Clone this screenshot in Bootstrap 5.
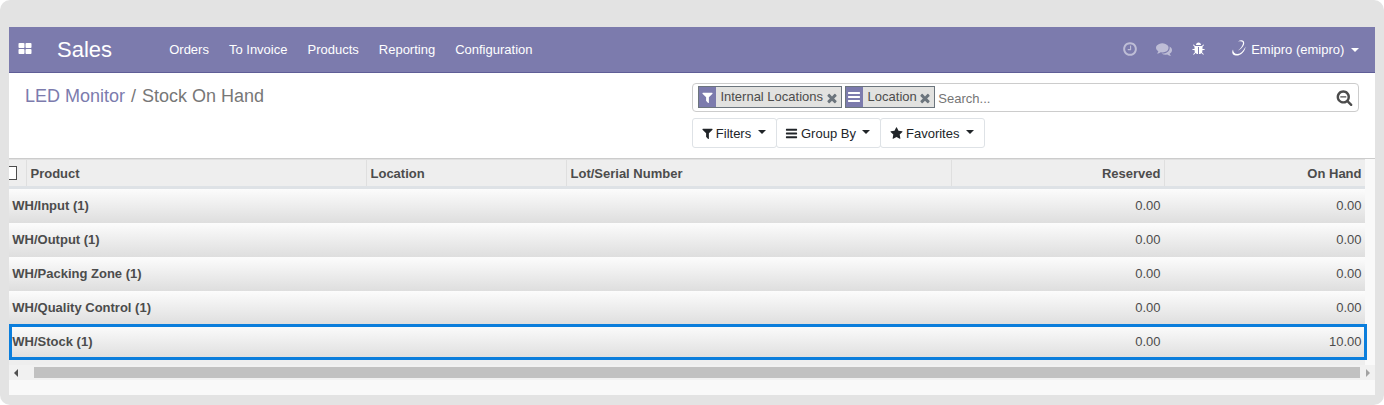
<!DOCTYPE html>
<html lang="en">
<head>
<meta charset="utf-8">
<meta name="viewport" content="width=device-width, initial-scale=1">
<title>Stock On Hand</title>
<link href="https://cdn.jsdelivr.net/npm/bootstrap@5.3.0/dist/css/bootstrap.min.css" rel="stylesheet">
<style>
body{font-family:"Liberation Sans",Arial,sans-serif;font-size:13px;line-height:20px;color:#4c4c4c;background:#fff}
.frame{height:405px;background:#e3e3e3;border-radius:10px;padding:27px 9px 10px}
.screen{height:368px;background:#f9f9f9}
svg{fill:currentColor;display:block;flex:none}
.topbar{height:46px;background:#7c7bad;border-bottom:1px solid #5f5e97;color:#fff;padding:0 16px 0 9px}
.topbar svg{margin-bottom:2px}
.topbar .apps{margin-bottom:1px}
.topbar .title{font-size:22px;line-height:45px;margin-left:25px;width:112.2px}
.topbar .menus{gap:20px}
.topbar .menus a,.crumbs a{text-decoration:none}
.topbar .menus a{color:#fff}
.dim{opacity:.5}
.talk{margin-left:18px}
.insect{margin-left:20px}
.topbar .swoosh{margin:0 4.3px 3px 24.7px}
.caret{width:0;height:0;border:4px solid transparent;border-top-color:currentColor;border-bottom:0}
.topbar .caret{margin-left:6.7px}
.panel{height:86px;background:#fff;border-bottom:1px solid #ccc;padding:10px 16px 0}
.crumbs{font-size:18px;line-height:26px;color:#777}
.crumbs a{color:#7c7bad}
.crumbs .sep{padding:0 1px}
.searchside{width:667px}
.searchbox{height:29px;border:1px solid #ccc;border-radius:4px;padding:0 5px}
.facet{height:22px;border:1px solid #6c757d;background:#e2e2e0;line-height:20px;margin-right:3px;margin-top:-1px}
.facet .ico{width:17px;height:20px;background:#7c7bad;color:#fff;margin-right:4.4px}
.facet + .facet .ico{margin-right:5px}
.facet .shut{color:#6c757d;margin:1px 2px 0 1.6px}
.hint{color:#757575;padding-top:2px}
.opts{margin-top:6px}
.opts .opt{width:105px;height:30px;border:1px solid #dee2e6;border-radius:3px;color:#212529;padding:0 10px 0 8px;margin-right:-1px;background:#fff}
.opts .opt:first-child{width:85px}
.opt span{padding:2px 0 0 3px}
.opt:last-child svg{margin-left:.5px}
.opt:last-child span{padding-left:3.5px}
.opt:first-child span{padding-left:1.8px}
.opt .caret{margin:0 0 3px auto}
.grid-row{display:grid;grid-template-columns:17px 340px 200px 385px 213px 201px;width:1356px}
.heads{height:30px;background:#eee;border-top:1px solid #e0e0e0;border-bottom:3px solid #dee2e6;font-weight:700;line-height:27px}
.heads>div{border-right:1px solid #dfdfdf;padding:0 3.5px 0 4.5px;margin-right:-1px;overflow:hidden}
.heads>div:first-child{padding:0}
.heads>div:last-child{border-right:0;margin-right:0}
.tick{width:8px;height:14px;border:1px solid #4c4c4c;border-left:0;margin-top:6px;background:#fff}
.group{height:34px;line-height:33px;background:linear-gradient(#fcfcfc,#dedede)}
.group .nm{grid-column:1 / span 4;font-weight:700;padding-left:3.3px}
.group .num{padding-right:3.5px;text-align:right}
.picked{position:relative}
.picked::after{content:"";position:absolute;inset:-1px -2px -1px 0;border:3px solid #0b7edc}
.foot{width:1356px;height:6px;background:#eee}
.hbar{height:15px;background:#f1f1f1;padding:0 5px}
.thumb{height:11px;background:#c1c1c1;margin:0 6px 0 16px}
.arr{width:0;height:0;border:4px solid transparent}
.arr.l{border-right-color:#505050;border-left:0}
.arr.r{border-left-color:#a3a3a3;border-right:0}
</style>
</head>
<body>
<svg width="0" height="0" class="position-absolute">
<symbol id="grid" viewBox="0 0 1792 1792"><path d="M832 1024v384q0 52-38 90t-90 38h-512q-52 0-90-38t-38-90v-384q0-52 38-90t90-38h512q52 0 90 38t38 90zm0-768v384q0 52-38 90t-90 38h-512q-52 0-90-38t-38-90v-384q0-52 38-90t90-38h512q52 0 90 38t38 90zm896 768v384q0 52-38 90t-90 38h-512q-52 0-90-38t-38-90v-384q0-52 38-90t90-38h512q52 0 90 38t38 90zm0-768v384q0 52-38 90t-90 38h-512q-52 0-90-38t-38-90v-384q0-52 38-90t90-38h512q52 0 90 38t38 90z"/></symbol>
<symbol id="filter" viewBox="0 0 1792 1792"><path d="M1595 295q17 41-14 70l-493 493v742q0 42-39 59-13 5-25 5-27 0-45-19l-256-256q-19-19-19-45v-486l-493-493q-31-29-14-70 17-39 59-39h1280q42 0 59 39z"/></symbol>
<symbol id="bars" viewBox="0 0 1792 1792"><path d="M1664 1344v128q0 26-19 45t-45 19h-1408q-26 0-45-19t-19-45v-128q0-26 19-45t45-19h1408q26 0 45 19t19 45zm0-512v128q0 26-19 45t-45 19h-1408q-26 0-45-19t-19-45v-128q0-26 19-45t45-19h1408q26 0 45 19t19 45zm0-512v128q0 26-19 45t-45 19h-1408q-26 0-45-19t-19-45v-128q0-26 19-45t45-19h1408q26 0 45 19t19 45z"/></symbol>
<symbol id="star" viewBox="0 0 1792 1792"><path d="M1728 647q0 22-26 48l-363 354 86 500q1 7 1 20 0 21-10.5 35.5t-30.5 14.5q-19 0-40-12l-449-236-449 236q-22 12-40 12-21 0-31.5-14.5t-10.5-35.5q0-6 2-20l86-500-364-354q-25-27-25-48 0-37 56-46l502-73 225-455q19-41 49-41t49 41l225 455 502 73q56 9 56 46z"/></symbol>
<symbol id="clock" viewBox="0 0 1792 1792"><path d="M1024 544v448q0 14-9 23t-23 9h-320q-14 0-23-9t-9-23v-64q0-14 9-23t23-9h224v-352q0-14 9-23t23-9h64q14 0 23 9t9 23zm416 352q0-148-73-273t-198-198-273-73-273 73-198 198-73 273 73 273 198 198 273 73 273-73 198-198 73-273zm224 0q0 209-103 385.5t-279.5 279.5-385.5 103-385.5-103-279.5-279.5-103-385.5 103-385.5 279.5-279.5 385.5-103 385.5 103 279.5 279.5 103 385.5z"/></symbol>
<symbol id="chat" viewBox="0 0 1792 1792"><path d="M1408 768q0 139-94 257t-256.5 186.5-353.5 68.5q-86 0-176-16-124 88-278 128-36 9-86 16h-3q-11 0-20.5-8t-11.5-21q-1-3-1-6.5t.5-6.5 2-6l2.5-5 3.5-5.5 4-5 4.5-5 4-4.5q5-6 23-25t26-29.5 22.5-29 25-38.5 20.5-44q-124-72-195-177t-71-224q0-139 94-257t256.5-186.5 353.5-68.5 353.5 68.5 256.5 186.5 94 257zm384 256q0 120-71 224.5t-195 176.5q10 24 20.5 44t25 38.5 22.5 29 26 29.5 23 25q1 1 4 4.5t4.5 5 4 5 3.5 5.500l2.500 5 2 6 .5 6.500-1 6.500q-3 14-13 22t-22 7q-50-7-86-16-154-40-278-128-90 16-176 16-271 0-472-132 58 4 88 4 161 0 309-45t264-129q125-92 192-212t67-254q0-77-23-152 129 71 204 178t75 230z"/></symbol>
<symbol id="bug" viewBox="0 0 1792 1792"><path d="M1632 960q0 26-19 45t-45 19h-224q0 171-67 290l208 209q19 19 19 45t-19 45q-18 19-45 19t-45-19l-198-197q-5 5-15 13t-42 28.500-65 36.500-82 29-97 13v-896h-128v896q-51 0-101.500-13.500t-87-33-66-39-43.500-32.500l-15-14-183 207q-20 21-48 21-24 0-43-16-19-18-20.500-44.500t15.500-46.500l202-227q-58-114-58-274h-224q-26 0-45-19t-19-45 19-45 45-19h224v-294l-173-173q-19-19-19-45t19-45 45-19 45 19l173 173h844l173-173q19-19 45-19t45 19 19 45-19 45l-173 173v294h224q26 0 45 19t19 45zm-480-576h-640q0-133 93.500-226.500t226.500-93.500 226.500 93.500 93.500 226.500z"/></symbol>
<symbol id="zoomout" viewBox="0 0 1792 1792"><path d="M1088 800v64q0 13-9.500 22.500t-22.500 9.500h-576q-13 0-22.500-9.500t-9.500-22.500v-64q0-13 9.500-22.500t22.500-9.500h576q13 0 22.500 9.500t9.500 22.500zm128 32q0-185-131.500-316.500t-316.500-131.500-316.500 131.500-131.500 316.500 131.500 316.500 316.500 131.500 316.500-131.500 131.500-316.500zm512 832q0 53-37.500 90.500t-90.500 37.500q-54 0-90-38l-343-342q-179 124-399 124-143 0-273.500-55.500t-225-150-150-225-55.500-273.500 55.500-273.500 150-225 225-150 273.500-55.500 273.500 55.500 225 150 150 225 55.500 273.500q0 220-124 399l343 343q37 37 37 90z"/></symbol>
<symbol id="times" viewBox="0 0 1792 1792"><path d="M1490 1322q0 40-28 68l-136 136q-28 28-68 28t-68-28l-294-294-294 294q-28 28-68 28t-68-28l-136-136q-28-28-28-68t28-68l294-294-294-294q-28-28-28-68t28-68l136-136q28-28 68-28t68 28l294 294 294-294q28-28 68-28t68 28l136 136q28 28 28 68t-28 68l-294 294 294 294q28 28 28 68z"/></symbol>
</svg>
<div class="frame">
<div class="screen">
<nav class="topbar d-flex align-items-center">
<svg class="apps" width="14" height="14"><use href="#grid"/></svg>
<span class="title">Sales</span>
<div class="menus d-flex"><a href="#">Orders</a><a href="#">To Invoice</a><a href="#">Products</a><a href="#">Reporting</a><a href="#">Configuration</a></div>
<div class="d-flex align-items-center ms-auto">
<svg class="dim" width="16" height="16"><use href="#clock"/></svg>
<svg class="dim talk" width="16" height="16"><use href="#chat"/></svg>
<svg class="insect" width="14" height="14"><use href="#bug"/></svg>
<svg class="swoosh" width="16" height="18" viewBox="0 0 16 18"><path d="M2 10.500C.5 13 1.200 16.200 4.800 16.600 10 17 14 12.500 14.600 7.500 12.500 12 9.500 15 6.500 15 3.400 15 2.300 13.300 2 10.500ZM7 2.600C9.500.6 13.500.8 13.200 4.300 12.900 7.500 10 10.200 7 11.600 9.500 9.500 11.600 7 12 4.500 12.200 2.200 9.800 1.700 7 2.600Z"/></svg>
<span>Emipro (emipro)</span><span class="caret"></span>
</div>
</nav>
<div class="panel d-flex justify-content-between">
<div class="crumbs"><a href="#">LED Monitor</a><span class="sep"> / </span><span>Stock On Hand</span></div>
<div class="searchside">
<div class="searchbox d-flex align-items-center">
<div class="facet d-flex"><span class="ico d-flex align-items-center justify-content-center"><svg width="13" height="13"><use href="#filter"/></svg></span>Internal Locations<svg class="shut align-self-center" width="14" height="14"><use href="#times"/></svg></div>
<div class="facet d-flex"><span class="ico d-flex align-items-center justify-content-center"><svg width="14" height="14"><use href="#bars"/></svg></span>Location<svg class="shut align-self-center" width="14" height="14"><use href="#times"/></svg></div>
<span class="hint">Search...</span>
<svg class="ms-auto" width="17" height="17"><use href="#zoomout"/></svg>
</div>
<div class="opts d-flex">
<div class="opt d-flex align-items-center"><svg width="13" height="13"><use href="#filter"/></svg><span>Filters</span><i class="caret"></i></div>
<div class="opt d-flex align-items-center"><svg width="13" height="13"><use href="#bars"/></svg><span>Group By</span><i class="caret"></i></div>
<div class="opt d-flex align-items-center"><svg width="13" height="13"><use href="#star"/></svg><span>Favorites</span><i class="caret"></i></div>
</div>
</div>
</div>
<div class="grid-row heads"><div><div class="tick"></div></div><div>Product</div><div>Location</div><div>Lot/Serial Number</div><div class="text-end">Reserved</div><div class="text-end">On Hand</div></div>
<div class="grid-row group"><div class="nm">WH/Input (1)</div><div class="num">0.00</div><div class="num">0.00</div></div>
<div class="grid-row group"><div class="nm">WH/Output (1)</div><div class="num">0.00</div><div class="num">0.00</div></div>
<div class="grid-row group"><div class="nm">WH/Packing Zone (1)</div><div class="num">0.00</div><div class="num">0.00</div></div>
<div class="grid-row group"><div class="nm">WH/Quality Control (1)</div><div class="num">0.00</div><div class="num">0.00</div></div>
<div class="grid-row group picked"><div class="nm">WH/Stock (1)</div><div class="num">0.00</div><div class="num">10.00</div></div>
<div class="foot"></div>
<div class="hbar d-flex align-items-center"><i class="arr l"></i><div class="thumb flex-grow-1"></div><i class="arr r"></i></div>
</div>
</div>
<script src="https://cdn.jsdelivr.net/npm/bootstrap@5.3.0/dist/js/bootstrap.bundle.min.js"></script>
</body>
</html>
